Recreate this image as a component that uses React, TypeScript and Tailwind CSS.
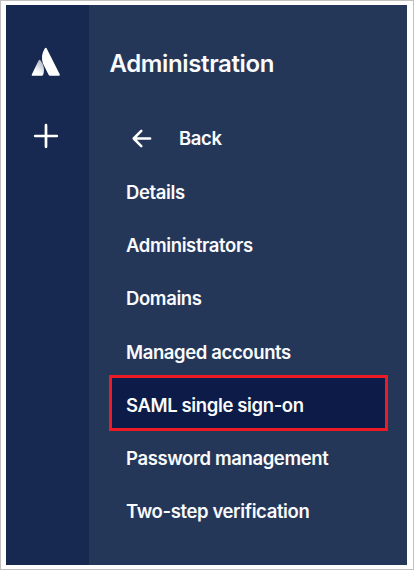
const before = ["Details", "Administrators", "Domains", "Managed accounts"];
const after = ["Password management", "Two-step verification"];

function Logo() {
  return (
    <svg className="block h-[30px] w-[30px]" viewBox="0 0 30 30">
      <defs>
        <linearGradient id="leg" x1="12" y1="15" x2="4" y2="26" gradientUnits="userSpaceOnUse">
          <stop offset="0" stopColor="#b0b6c5" />
          <stop offset="0.85" stopColor="#ffffff" />
        </linearGradient>
      </defs>
      <path
        d="M7.600 13.500c.5-.8 1.400-.9 2-.1 3.300 4.300 4.200 9.600 2.700 14.200-.3.7-.6 1.100-1.200 1.100H1.600c-.7 0-1.100-.6-.8-1.300z"
        fill="url(#leg)"
      />
      <path
        d="M13.900 1.300c.4-.7 1.300-.7 1.700 0l13.100 26c.4.8 0 1.400-.8 1.400h-8.900c-.7 0-1.100-.3-1.400-.9L11.900 16.400C10.200 11.500 10.700 6.300 13.900 1.300z"
        fill="#ffffff"
      />
    </svg>
  );
}

function Item({ label }: { label: string }) {
  return (
    <li className="flex h-[53.33px] items-center pl-[17px]">
      <span>{label}</span>
    </li>
  );
}

export default function App() {
  return (
    <div className="flex h-[570px] w-[414px] border border-[#c0c0c0] bg-white pt-[4px] pr-[6px] pb-[4px] pl-[5px] font-['Inter','Liberation_Sans',sans-serif] text-[#fafbfd]">
      <aside className="flex w-[83px] shrink-0 flex-col items-center bg-[#172950] pt-[42px] pr-[3px]">
        <Logo />
        <svg className="mt-[46px] block h-[26px] w-[26px]" viewBox="0 0 26 26" fill="none" stroke="#ffffff" strokeWidth="2.700" strokeLinecap="round">
          <path d="M13 2.200v21.600M2.200 13h21.600" />
        </svg>
      </aside>
      <main className="flex min-w-0 flex-1 flex-col bg-[#253759] pr-[19px] pl-[20px]">
        <h1 className="mt-[43px] h-[32px] pl-[0.5px] text-[24px] leading-8 font-semibold tracking-[-0.37px]">Administration</h1>
        <nav className="mt-[31px] text-[18.5px] leading-6 font-semibold tracking-[-0.38px] whitespace-nowrap">
          <div className="flex h-[53.33px] items-center">
            <svg className="ml-[22px] block h-[20px] w-[22px]" viewBox="0 0 22 20" fill="none" stroke="#ffffff" strokeWidth="2.500" strokeLinecap="round" strokeLinejoin="round">
              <path d="M10.300 2.900L2.700 10.500l7.600 7.600M3.200 10.500h15.900" />
            </svg>
            <span className="ml-[26px] pt-[1px]">Back</span>
          </div>
          <ul className="pt-[0.6px]">
            {before.map((label) => (
              <Item key={label} label={label} />
            ))}
            <li className="-mt-[3.6px] flex h-[56.33px] items-center border-[3px] border-[#ed1c24] bg-[#0c1b47] pt-[5px] pl-[14px]">
              <span>SAML single sign-on</span>
            </li>
            {after.map((label, i) => (
              <Item key={label} label={label} />
            ))}
          </ul>
        </nav>
      </main>
    </div>
  );
}
